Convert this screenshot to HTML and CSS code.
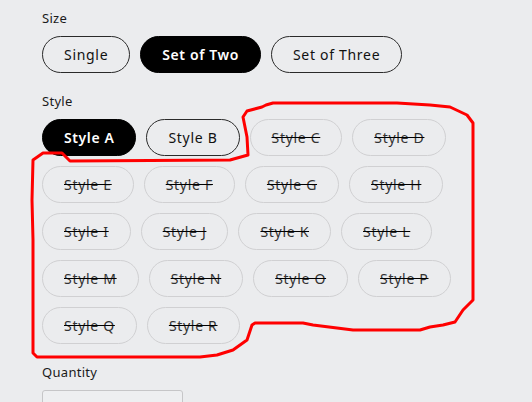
FILE: index.html
```html
<!DOCTYPE html>
<html lang="en">
<head>
    <meta charset="UTF-8">
    <meta name="viewport" content="width=device-width, initial-scale=1.0">
    <title>Product Options</title>
    <link rel="stylesheet" href="styles.css">
</head>
<body>
    <div class="options">
        <div class="option-group">
            <div class="option-label">Size</div>
            <div class="option-list">
                <button class="pill">Single</button>
                <button class="pill selected">Set of Two</button>
                <button class="pill">Set of Three</button>
            </div>
        </div>
        <div class="option-group">
            <div class="option-label">Style</div>
            <div class="option-list">
                <button class="pill selected">Style A</button>
                <button class="pill">Style B</button>
                <button class="pill disabled">Style C</button>
                <button class="pill disabled">Style D</button>
                <button class="pill disabled">Style E</button>
                <button class="pill disabled">Style F</button>
                <button class="pill disabled">Style G</button>
                <button class="pill disabled">Style H</button>
                <button class="pill disabled">Style I</button>
                <button class="pill disabled">Style J</button>
                <button class="pill disabled">Style K</button>
                <button class="pill disabled">Style L</button>
                <button class="pill disabled">Style M</button>
                <button class="pill disabled">Style N</button>
                <button class="pill disabled">Style O</button>
                <button class="pill disabled">Style P</button>
                <button class="pill disabled">Style Q</button>
                <button class="pill disabled">Style R</button>
            </div>
        </div>
        <div class="option-group">
            <div class="option-label">Quantity</div>
            <input class="qty" type="text">
        </div>
    </div>

    <!-- marker drawn over the unavailable styles -->
    <svg class="marker" width="532" height="402" viewBox="0 0 532 402">
        <path d="M266 105 L273 103 L397 103 L430 105 L450 107 L467 115 L473 123 L473 300 L463 310 L455 322 L443 325 L430 327 L420 330 L353 330 L337 328 L313 325 L303 323 L255 323 L252 325 L247 340 L233 350 L217 355 L200 357 L37 357 L33 353 L33 240 L32 200 L33 160 L43 153 L62 153 L67 158 L70 161 L230 160 L248 155 L247 137 L243 117 L247 111 L262 107 Z"
              fill="none" stroke="#ff0000" stroke-width="3" stroke-linejoin="round"/>
    </svg>
</body>
</html>
```

FILE: styles.css
```css
body {
    font-family: "Noto Sans", sans-serif;
    background-color: #ebecee;
    color: #1a1a1a;
    margin: 0;
    padding: 9px 0 0 42px;
    overflow: hidden;
}
.options {
    width: 420px;
}
.option-group {
    margin-bottom: 19px;
}
.option-label {
    font-size: 13px;
    line-height: 18px;
    margin-bottom: 9px;
    letter-spacing: 0.3px;
}
.option-list {
    display: flex;
    flex-wrap: wrap;
    gap: 10px;
}
.pill {
    font-family: inherit;
    font-size: 14px;
    line-height: 19px;
    letter-spacing: 0.7px;
    padding: 8px 21px;
    border: 1px solid #2a2a2a;
    border-radius: 19px;
    background: transparent;
    color: #111;
    cursor: pointer;
}
.pill.selected {
    background-color: #000;
    border-color: #000;
    color: #fff;
    font-weight: 600;
    letter-spacing: 0.6px;
}
.pill.disabled {
    border-color: #d0d0d2;
    color: #333;
    text-decoration: line-through;
    text-decoration-color: #000;
    cursor: default;
}
.qty {
    width: 141px;
    height: 30px;
    box-sizing: border-box;
    border: 1px solid #c6c6c8;
    border-radius: 3px;
    background-color: #eeeff1;
}
.marker {
    position: absolute;
    top: 0;
    left: 0;
    pointer-events: none;
}
```
